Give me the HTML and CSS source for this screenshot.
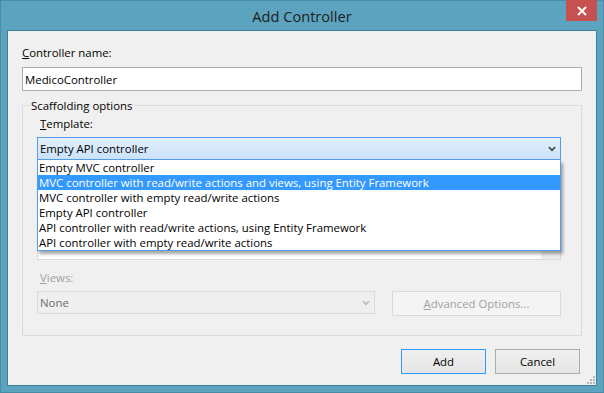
FILE: index.html
```html
<!DOCTYPE html>
<html lang="en">
<head>
    <meta charset="UTF-8">
    <title>Add Controller</title>
    <link rel="stylesheet" href="styles.css">
</head>
<body>
    <div class="window">
        <div class="titlebar">
            <div class="title">Add Controller</div>
            <button class="close-btn" aria-label="Close">
                <svg width="10" height="10" viewBox="0 0 10 10"><path d="M1 1 L9 9 M9 1 L1 9" stroke="#fff" stroke-width="2"/></svg>
            </button>
        </div>

        <div class="client">
            <label class="label" for="name"><u>C</u>ontroller name:</label>
            <input id="name" class="textbox" type="text" value="MedicoController">

            <fieldset class="group">
                <legend><span>Scaffolding options</span></legend>

                <div class="label"><u>T</u>emplate:</div>
                <div class="combo-wrap">
                    <div class="combo combo-open">
                        <span>Empty API controller</span>
                        <svg class="chevron" width="8" height="6" viewBox="0 0 8 6"><path d="M0.8 1 L4 4.2 L7.2 1" fill="none" stroke="#4a4a4a" stroke-width="1.7"/></svg>
                    </div>
                    <ul class="dropdown">
                        <li>Empty MVC controller</li>
                        <li class="selected">MVC controller with read/write actions and views, using Entity Framework</li>
                        <li>MVC controller with empty read/write actions</li>
                        <li>Empty API controller</li>
                        <li>API controller with read/write actions, using Entity Framework</li>
                        <li>API controller with empty read/write actions</li>
                    </ul>
                </div>

                <div class="listbox">
                    <div class="list-area"></div>
                    <div class="scrollbar"></div>
                </div>

                <div class="label label-disabled"><u>V</u>iews:</div>
                <div class="views-row">
                    <div class="combo combo-disabled">
                        <span>None</span>
                        <svg class="chevron" width="8" height="6" viewBox="0 0 8 6"><path d="M0.8 1 L4 4.2 L7.2 1" fill="none" stroke="#bdbdbd" stroke-width="1.7"/></svg>
                    </div>
                    <button class="btn btn-disabled" disabled><u>A</u>dvanced Options...</button>
                </div>
            </fieldset>

            <div class="footer">
                <button class="btn btn-default">Add</button>
                <button class="btn">Cancel</button>
            </div>

            <svg class="grip" width="8" height="8" viewBox="0 0 8 8">
                <rect x="6" y="0" width="2" height="2" fill="#b8b8b8"/>
                <rect x="3" y="3" width="2" height="2" fill="#b8b8b8"/>
                <rect x="6" y="3" width="2" height="2" fill="#b8b8b8"/>
                <rect x="0" y="6" width="2" height="2" fill="#b8b8b8"/>
                <rect x="3" y="6" width="2" height="2" fill="#b8b8b8"/>
                <rect x="6" y="6" width="2" height="2" fill="#b8b8b8"/>
            </svg>
        </div>
    </div>
</body>
</html>
```

FILE: styles.css
```css
* {
    margin: 0;
    padding: 0;
    box-sizing: border-box;
}

body {
    font-family: 'Open Sans', 'Noto Sans', sans-serif;
    font-size: 11.4px;
    color: #000;
    background: #5ba3be;
}

.window {
    width: 604px;
    height: 393px;
    background: #5ba3be;
    border: 1px solid #4a8ca6;
    padding: 0 6px 6px;
}

/* title bar */
.titlebar {
    display: flex;
    align-items: center;
    height: 29px;
}

.title {
    flex: 1;
    text-align: center;
    padding-left: 31px;
    font-size: 14.6px;
    color: #1e1e1e;
}

.close-btn {
    align-self: flex-start;
    margin-top: -1px;
    width: 31px;
    height: 21px;
    border: none;
    background: #c75050;
    display: flex;
    align-items: center;
    justify-content: center;
}

/* dialog body */
.client {
    position: relative;
    height: 356px;
    background: #f0f0f0;
    border: 1px solid #3f809a;
    padding: 14px 14px 0;
}

.label {
    display: block;
    height: 15px;
    line-height: 15px;
}

.label-disabled {
    color: #a0a0a0;
}

.textbox {
    display: block;
    width: 100%;
    height: 24px;
    margin-top: 7px;
    padding: 0 2px;
    border: 1px solid #abadb3;
    background: #fff;
    font-family: inherit;
    font-size: 11.4px;
    color: #000;
    outline: none;
}

.group {
    margin-top: 7px;
    border: 1px solid #dcdcdc;
    padding: 3px 20px 19px 14px;
}

.group legend {
    margin-left: -8px;
    padding: 0 2px;
    line-height: 15px;
}

.group .label {
    margin-left: 3px;
}

.combo-wrap {
    position: relative;
    margin-top: 6px;
}

.combo {
    display: flex;
    align-items: center;
    justify-content: space-between;
    height: 23px;
    padding: 0 4px 0 2px;
    border: 1px solid #d9d9d9;
}

.combo-open {
    background: linear-gradient(#e2effc, #c9e2fa);
    border-color: #569de5;
}

.combo-disabled {
    width: 338px;
    background: #efefef;
    color: #6d6d6d;
}

.chevron {
    flex-shrink: 0;
}

.dropdown {
    position: absolute;
    top: 100%;
    left: 0;
    right: 0;
    z-index: 2;
    list-style: none;
    background: #fff;
    border: 1px solid #569de5;
    border-top: none;
    box-shadow: 2px 3px 3px rgba(0, 0, 0, 0.35);
}

.dropdown li {
    height: 15px;
    line-height: 15px;
    padding-left: 1px;
    white-space: nowrap;
}

.dropdown li.selected {
    background: #3399ff;
    color: #fff;
}

.listbox {
    display: flex;
    height: 94px;
    margin-top: 6px;
    border: 1px solid #d9d9d9;
    background: #fff;
}

.list-area {
    flex: 1;
}

.scrollbar {
    width: 19px;
    background: #ececec;
}

.label-disabled {
    margin-top: 10px;
}

.views-row {
    display: flex;
    align-items: flex-start;
    justify-content: space-between;
    margin-top: 6px;
}

/* buttons */
.btn {
    height: 25px;
    width: 85px;
    font-family: inherit;
    font-size: 11.4px;
    color: #000;
    background: linear-gradient(#f0f0f0, #e5e5e5);
    border: 1px solid #acacac;
}

.btn-default {
    border-color: #3399ff;
}

.btn-disabled {
    width: 169px;
    background: #f4f4f4;
    border-color: #d9d9d9;
    color: #a2a2a2;
}

.footer {
    display: flex;
    justify-content: flex-end;
    gap: 9px;
    margin-top: 13px;
    padding-right: 2px;
}

.grip {
    position: absolute;
    right: 1px;
    bottom: 1px;
}
```
